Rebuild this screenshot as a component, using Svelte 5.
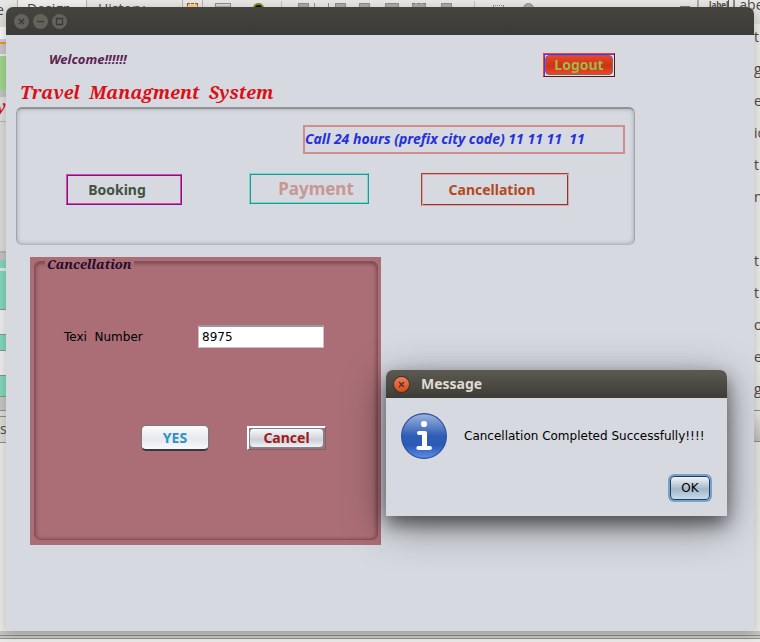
<script>
  let taxiNumber = $state('8975');

  // toolbar icons with the space in front of each
  const tools = [
    ['select', 5], ['panel', 17], ['eye', 22], ['sep', 17], ['left', 16],
    ['tick', 5], ['tick', 13], ['right', 6], ['center', 13], ['rows', 15],
    ['dash', 13], ['foot', 15], ['sep', 22], ['dots', 18], ['up', 19]
  ];

  const palette = ['t', 'g', 'ec', 'ic', 't', 'n', '', 't', 't', 'o', 'e', 'g'];

  const strips = [
    ['#dfddda', 3], ['#f5f5f5', 12], ['#cbcbe6', 3], ['#f09a1c', 2],
    ['#c6c6c6', 10], ['#e9e9e9', 2], ['#a0d58c', 34], ['#c2c2c2', 7],
    ['#dfdedb', 24, 'y'], ['#b5b3b0', 1], ['#dbdad6', 129], ['#b5b3b0', 2],
    ['#c4c3c1', 7], ['#81d6ba', 8], ['#e3e3e3', 3], ['#81d6ba', 38],
    ['#93908c', 1], ['#ededed', 24], ['#93908c', 1], ['#81d6ba', 15],
    ['#93908c', 1], ['#ededed', 24], ['#93908c', 1], ['#81d6ba', 20],
    ['#93908c', 1], ['#c6c5c2', 13], ['#93908c', 1], ['#dddbd7', 5],
    ['#93908c', 1], ['#dddbd7', 25, 's'], ['#93908c', 1]
  ];
</script>

<div class="desktop">
  <div class="ide" aria-hidden="true">
    <div class="ide-top">
      <span class="edge">e</span>
      <span class="tab">Design</span>
      <span class="history">History</span>
      <span class="tools">
        {#each tools as [tool, space]}
          <i class={tool} style:margin-left="{space}px"></i>
        {/each}
      </span>
      <span class="caret"></span>
      <span class="labels"><b>label</b>Label</span>
    </div>
    <div class="ide-left">
      {#each strips as [color, size, text]}
        <div class={text ? 'strip ' + text : 'strip'} style:background={color} style:height="{size}px">{text ?? ''}</div>
      {/each}
    </div>
    <div class="ide-right">
      {#each palette as item}
        <div class="item">{item}</div>
      {/each}
      <div class="grip"></div>
    </div>
    <div class="ide-bottom"></div>
  </div>

  <main class="window">
    <header class="titlebar">
      <button class="round" aria-label="Close"><svg viewBox="0 0 15 15"><path d="M5 5l5 5M10 5l-5 5" /></svg></button>
      <button class="round" aria-label="Minimize"><svg viewBox="0 0 15 15"><path d="M4 7.5h7" /></svg></button>
      <button class="round" aria-label="Maximize"><svg viewBox="0 0 15 15"><path d="M4.5 4.5h6v6h-6z" /></svg></button>
    </header>

    <div class="content">
      <div class="top">
        <span class="welcome">Welcome!!!!!!</span>
        <button class="logout"><span>Logout</span></button>
      </div>
      <h1>Travel  Managment  System</h1>

      <nav class="menu">
        <p class="call">Call 24 hours (prefix city code) 11 11 11&nbsp; 11</p>
        <div class="choices">
          <button class="booking">Booking</button>
          <button class="payment">Payment</button>
          <button class="cancellation">Cancellation</button>
        </div>
      </nav>

      <section class="card">
        <fieldset>
          <legend>Cancellation</legend>
          <div class="field">
            <label for="taxi">Texi&nbsp; Number</label>
            <input id="taxi" type="text" bind:value={taxiNumber} />
          </div>
          <div class="actions">
            <button class="yes">YES</button>
            <button class="cancel"><span>Cancel</span></button>
          </div>
        </fieldset>
      </section>
    </div>
  </main>

  <div class="dialog" role="dialog" aria-labelledby="dialog-title">
    <header class="dialog-title">
      <button class="round close" aria-label="Close message"><svg viewBox="0 0 15 15"><path d="M5 5l5 5M10 5l-5 5" /></svg></button>
      <h2 id="dialog-title">Message</h2>
    </header>
    <div class="message">
      <svg class="info" viewBox="0 0 46 46">
        <defs>
          <linearGradient id="blue" x1="0" y1="0" x2="0" y2="1">
            <stop offset="0" stop-color="#9fb5df" />
            <stop offset="0.5" stop-color="#2e5cb5" />
            <stop offset="0.72" stop-color="#2c5bb8" />
            <stop offset="1" stop-color="#5d8fe8" />
          </linearGradient>
        </defs>
        <circle cx="23" cy="23" r="22.4" fill="url(#blue)" stroke="#284c99" stroke-width="1.1" />
        <circle cx="23" cy="11" r="3.1" fill="#fff" />
        <path d="M18 18h6q2 0 2 2v13h2.800q2.200 0 2.200 2t-2.200 2H17.500q-2.200 0-2.200-2t2.200-2H21V22h-3q-2 0-2-2t2-2z" fill="#fff" />
      </svg>
      <p>Cancellation Completed Successfully!!!!</p>
    </div>
    <div class="confirm"><button class="ok">OK</button></div>
  </div>
</div>

<style>
  :global(body) {
    margin: 0;
    background: #e6e6e4;
  }
  .desktop {
    position: relative;
    display: grid;
    min-height: 642px;
    height: 100vh;
    overflow: hidden;
    font-family: 'DejaVu Sans', sans-serif;
    font-size: 12px;
  }
  .desktop * {
    box-sizing: border-box;
  }
  button {
    padding: 0;
    margin: 0;
    border: 0;
    font-family: 'Noto Sans', sans-serif;
    font-weight: bold;
    cursor: pointer;
  }
  p, h1, h2 {
    margin: 0;
  }

  /* editor behind the window */
  .ide {
    grid-area: 1 / 1;
    display: grid;
    grid-template: 24px 1fr 11px / 6px 1fr 6px;
    min-width: 0;
    background: #e9e9e7;
    color: #4a4a48;
    font: 14px 'Open Sans', sans-serif;
  }
  .ide-top {
    grid-column: 1 / -1;
    display: flex;
    align-items: flex-start;
    overflow: hidden;
    background: linear-gradient(#e8e7e5, #dcdbd8);
    line-height: 18px;
  }
  .edge {
    width: 17px;
    margin-left: -4px;
    line-height: 20px;
  }
  .tab {
    width: 70px;
    margin-left: 4px;
    padding-left: 9px;
    border: solid #b4b2ae;
    border-width: 0 1px;
    background: #efeeec;
  }
  .history {
    padding-left: 11px;
    width: 95px;
  }
  .tools {
    display: flex;
    padding-top: 3px;
    flex: 1;
  }
  .tools i {
    flex: none;
    width: 11px;
    height: 10px;
    border: 1px solid #8d8d8b;
    background: #aaa9a7;
  }
  .tools .select {
    border: 1px dashed #93600f;
    background: #f6cf9c;
    outline: 1px solid #b4b2ae;
    outline-offset: 4px;
  }
  .tools .panel {
    width: 16px;
    box-shadow: inset 0 2px #d5d5d3;
  }
  .tools .eye {
    border: 2px solid #7b8e19;
    border-radius: 50%;
    background: #111;
  }
  .tools .sep {
    width: 1px;
    margin-top: -2px;
    border-width: 0 0 0 1px;
    border-color: #bcbbb8;
  }
  .tools .tick {
    width: 1px;
    border-width: 0 0 0 1px;
  }
  .tools .rows {
    width: 14px;
  }
  .tools .dash {
    width: 14px;
    border-top: 1px dashed #777;
  }
  .tools .dots {
    margin-top: 2px;
    border-style: dotted;
    background: none;
  }
  .tools .up {
    border-radius: 6px 6px 0 0;
  }
  .caret {
    width: 10px;
    height: 7px;
    margin-right: 7px;
    border-bottom: 1px solid #777;
  }
  .labels {
    display: flex;
    width: 63px;
    padding-left: 10px;
    border-left: 2px solid #aaa8a4;
    line-height: 10px;
  }
  .labels b {
    width: 20px;
    margin-right: 3px;
    border-right: 1px solid #555;
    font-size: 8px;
  }
  .ide-left {
    grid-area: 2 / 1;
    overflow: hidden;
  }
  .strip {
    overflow: hidden;
    line-height: 24px;
  }
  .strip.y {
    color: #cf1016;
    font: italic bold 18px/18px 'Noto Serif', 'Liberation Serif', serif;
    direction: rtl;
  }
  .ide-right {
    grid-area: 2 / 3;
    overflow: hidden;
  }
  .item {
    height: 32px;
    line-height: 26px;
  }
  .grip {
    height: 32px;
    margin-top: 2px;
    border: solid #93908c;
    border-width: 1px 0;
    background: linear-gradient(#ecebea, #c4c3c1);
  }
  .ide-bottom {
    grid-area: 3 / 1 / 4 / -1;
    height: 8px;
    border-bottom: 1px solid #8f8f8b;
    background: linear-gradient(#c4c4c0 4px, #888884 4px, #888884 5px, #c8c8c5 5px);
  }

  /* main window */
  .window {
    grid-area: 1 / 1;
    z-index: 2;
    margin: 7px 6px 11px;
    border-radius: 7px 7px 0 0;
    background: #d6d9e0;
    box-shadow: 0 3px 12px rgba(0, 0, 0, 0.2);
  }
  .titlebar {
    display: flex;
    align-items: center;
    gap: 4px;
    height: 28px;
    padding: 0 8px;
    border-radius: 7px 7px 0 0;
    background: linear-gradient(#45443f, #3c3b37);
  }
  .round {
    width: 15px;
    height: 15px;
    border-radius: 50%;
    background: #63625c;
  }
  .round svg {
    display: block;
    width: 15px;
    height: 15px;
    fill: none;
    stroke: #3a3934;
    stroke-width: 1.3;
  }
  .content {
    padding: 18px 10px 0;
  }
  .top {
    display: flex;
    justify-content: space-between;
    max-width: 599px;
    padding-left: 33px;
  }
  .welcome {
    color: #5c2352;
    font: italic bold 13px/12px 'Noto Sans', sans-serif;
  }
  .logout {
    width: 72px;
    height: 24px;
    padding: 1px;
    border: 1px solid;
    border-color: #f0452c #551512 #551512 #f0452c;
    background: #e2dfe9;
    box-shadow: inset 1px 1px #6d25ef;
    color: #a0b94a;
    font-size: 14px;
    line-height: 18px;
  }
  .logout span {
    display: block;
    height: 20px;
    border: 1px solid #77696c;
    border-radius: 4px;
    background: linear-gradient(#ee4425, #ca3318 55%, #f04522);
  }
  h1 {
    margin: 4px 0 3px 4px;
    color: #d81118;
    font: italic bold 18px/23px 'Noto Serif', 'Liberation Serif', serif;
    white-space: pre;
  }
  .menu {
    max-width: 619px;
    height: 138px;
    padding: 16px 9px 0 49px;
    border: 1px solid #a2a4a9;
    border-top: 2px solid #909296;
    border-bottom-color: #b5b7bc;
    border-radius: 6px;
    box-shadow: inset 0 0 4px rgba(0, 0, 0, 0.25);
  }
  .call {
    width: 322px;
    height: 29px;
    margin-left: auto;
    border: 2px solid #d18d8d;
    color: #2730dc;
    font: italic bold 14px/24px 'Noto Sans', sans-serif;
    white-space: nowrap;
  }
  .choices {
    display: flex;
    align-items: center;
    padding-top: 19px;
  }
  .choices button {
    background: none;
    font-size: 14px;
    line-height: 27px;
  }
  .choices .booking {
    width: 116px;
    height: 31px;
    margin-right: 67px;
    padding-right: 14px;
    border: 1px solid;
    border-color: #ef4496 #6a1b99 #6a1b99 #ef4496;
    box-shadow: inset 1px 1px #6a1b99, inset -1px -1px #ef4496;
    color: #43523f;
  }
  .choices .payment {
    align-self: flex-start;
    width: 120px;
    height: 31px;
    margin-right: 52px;
    padding-left: 14px;
    border: 1px solid;
    border-color: #70dfc1 #2296a5 #2296a5 #70dfc1;
    box-shadow: inset 1px 1px #2296a5, inset -1px -1px #70dfc1;
    color: #c99693;
    font-size: 17px;
  }
  .choices .cancellation {
    width: 148px;
    height: 33px;
    padding-right: 6px;
    border: 1px solid;
    border-color: #9b4543 #ef9c9c #ef9c9c #9b4543;
    box-shadow: inset 1px 1px #ef9c9c, inset -1px -1px #75403d;
    color: #b3491d;
  }

  /* cancellation form */
  .card {
    max-width: 351px;
    height: 288px;
    margin: 12px 0 0 14px;
    padding: 1px 3px 5px 4px;
    background: #ab6e76;
  }
  fieldset {
    height: 282px;
    min-width: 0;
    margin: 0;
    padding: 60px 0 0 29px;
    border: 1px solid #82535a;
    border-radius: 6px;
    box-shadow: inset 0 1px 4px rgba(40, 0, 10, 0.5);
  }
  legend {
    height: 7px;
    margin-left: -19px;
    padding: 0 2px;
    background: #ab6e76;
    color: #230b2c;
    font: italic bold 13px/13px 'Noto Serif', 'Liberation Serif', serif;
  }
  .field {
    display: flex;
    align-items: center;
  }
  label {
    width: 134px;
    color: #000;
  }
  input {
    width: 126px;
    height: 23px;
    padding: 0 3px;
    border: 1px solid #c3c3c3;
    border-top: 2px solid #99999b;
    border-radius: 0;
    background: #fff;
    color: #000;
    font: 12px 'DejaVu Sans', sans-serif;
  }
  .actions {
    display: flex;
    align-items: center;
    gap: 38px;
    padding: 77px 0 0 77px;
  }
  .actions button {
    font-size: 14px;
  }
  .actions .yes {
    width: 68px;
    height: 26px;
    border: 1px solid #78787f;
    border-bottom: 2px solid #37373e;
    border-radius: 5px;
    background: linear-gradient(#fbfbfc, #e7e9ee 55%, #f8f9fb);
    color: #2d92c5;
  }
  .actions .cancel {
    width: 79px;
    height: 24px;
    padding: 1px;
    border: 1px solid;
    border-color: #fff #76656a #76656a #fff;
    background: #ab6e76;
    box-shadow: inset 1px 1px #fff;
    color: #9e1b20;
    line-height: 18px;
  }
  .cancel span {
    display: block;
    height: 20px;
    border: 1px solid #80818a;
    border-radius: 4px;
    background: linear-gradient(#f8f8fa, #cdd0d8 60%, #f1f2f4);
  }

  /* message dialog */
  .dialog {
    position: absolute;
    z-index: 3;
    top: 370px;
    left: 386px;
    width: 341px;
    padding-bottom: 16px;
    border-radius: 7px 7px 0 0;
    background: #d6d9e0;
    box-shadow: 0 8px 18px rgba(0, 0, 0, 0.5), 0 10px 44px rgba(0, 0, 0, 0.4);
  }
  .dialog-title {
    display: flex;
    align-items: center;
    gap: 12px;
    height: 28px;
    padding-left: 8px;
    border-radius: 7px 7px 0 0;
    background: linear-gradient(#5c5a50, #3d3c37);
  }
  h2 {
    color: #dfdbd2;
    font: bold 14px/20px 'Noto Sans', sans-serif;
  }
  .close {
    background: linear-gradient(#f37d56, #dd4818);
    box-shadow: 0 0 0 1px #353430;
  }
  .message {
    display: flex;
    align-items: center;
    gap: 17px;
    padding: 15px 15px 0;
    color: #000;
    white-space: nowrap;
  }
  .info {
    flex: none;
    width: 46px;
    height: 46px;
  }
  .confirm {
    display: flex;
    justify-content: flex-end;
    padding: 17px 17px 0;
  }
  .ok {
    width: 40px;
    height: 24px;
    border: 1px solid #263b55;
    border-radius: 4px;
    background: linear-gradient(#f1f4f8, #a3b7ca 55%, #c8daec);
    box-shadow: 0 0 0 2px #73a4d1;
    color: #000;
    font: 12px 'DejaVu Sans', sans-serif;
  }
</style>
